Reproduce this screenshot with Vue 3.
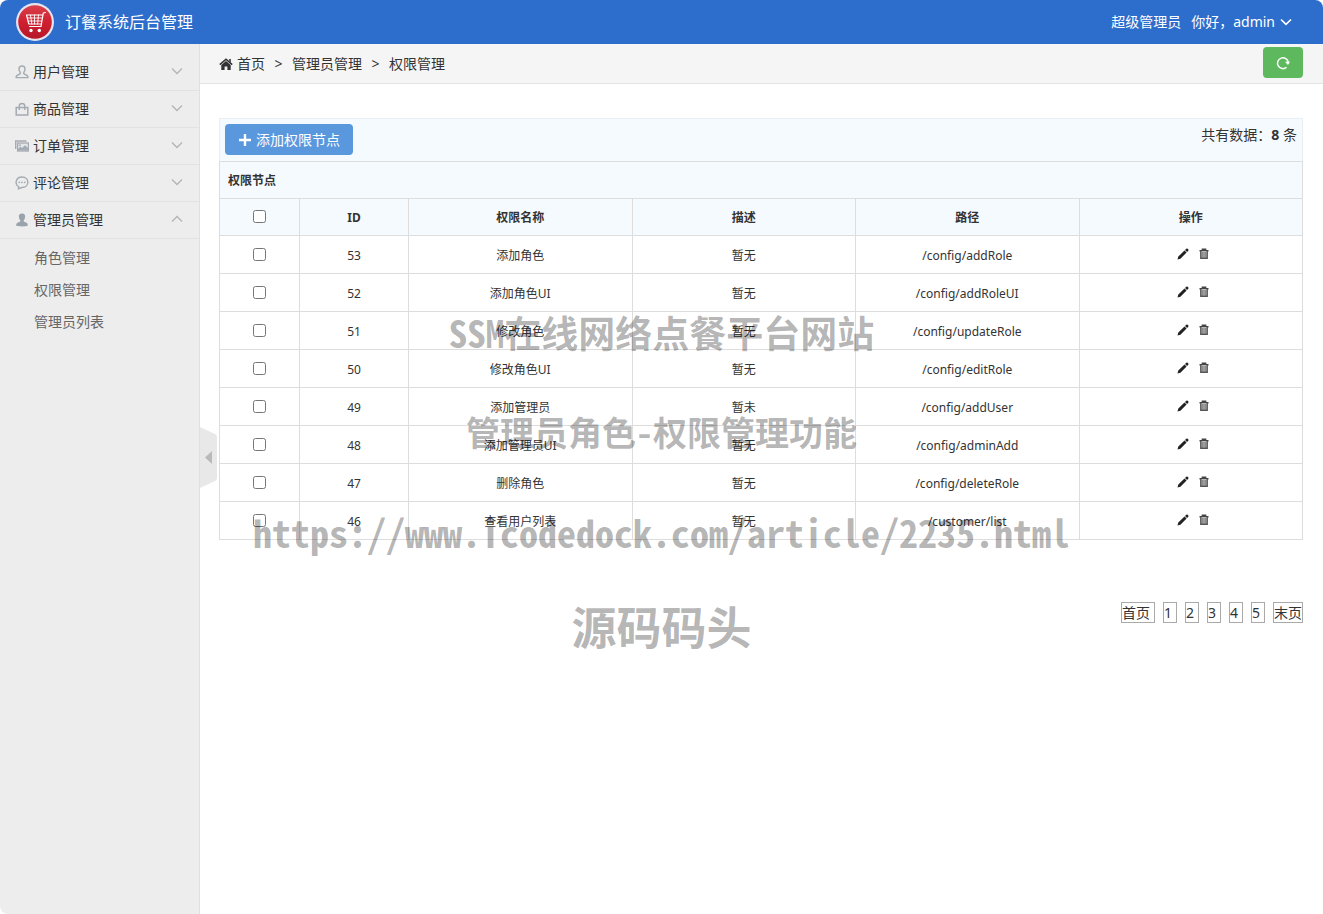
<script setup>
import { ref } from 'vue'

const menus = ref([
  { name: '用户管理', icon: 'user', open: false, items: [] },
  { name: '商品管理', icon: 'bag', open: false, items: [] },
  { name: '订单管理', icon: 'images', open: false, items: [] },
  { name: '评论管理', icon: 'comment', open: false, items: [] },
  { name: '管理员管理', icon: 'admin', open: true, items: ['角色管理', '权限管理', '管理员列表'] },
])

const rows = [
  { id: 53, name: '添加角色', desc: '暂无', path: '/config/addRole' },
  { id: 52, name: '添加角色UI', desc: '暂无', path: '/config/addRoleUI' },
  { id: 51, name: '修改角色', desc: '暂无', path: '/config/updateRole' },
  { id: 50, name: '修改角色UI', desc: '暂无', path: '/config/editRole' },
  { id: 49, name: '添加管理员', desc: '暂未', path: '/config/addUser' },
  { id: 48, name: '添加管理员UI', desc: '暂无', path: '/config/adminAdd' },
  { id: 47, name: '删除角色', desc: '暂无', path: '/config/deleteRole' },
  { id: 46, name: '查看用户列表', desc: '暂无', path: '/customer/list' },
]

const pages = ['首页', '1', '2', '3', '4', '5', '末页']
</script>

<template>
  <div class="app">
    <header class="topbar">
      <svg class="logo" viewBox="0 0 38 38" aria-hidden="true">
        <defs>
          <linearGradient id="red" x1="0" y1="0" x2="0" y2="1">
            <stop offset="0" stop-color="#d9404c" />
            <stop offset="0.5" stop-color="#cf1f30" />
            <stop offset="1" stop-color="#b5182a" />
          </linearGradient>
        </defs>
        <circle cx="19" cy="19" r="19" fill="#e6e4ee" />
        <circle cx="19" cy="19" r="16.8" fill="url(#red)" />
        <g fill="none" stroke="#fff" stroke-width="1.2" stroke-linecap="round" stroke-linejoin="round">
          <path d="M29.300 9.500 L27.300 10 L25 23.500 H13.500" />
          <path d="M10.500 12 H26.500 M10.500 12 L12.800 21 H25" />
          <path d="M11.500 15 H26 M12.200 18 H25.500 M14.500 12 L15.800 21 M18.500 12 V21 M22.500 12 L21.600 21" stroke-width="0.9" />
        </g>
        <circle cx="15" cy="27.500" r="1.700" fill="#fff" />
        <circle cx="23.300" cy="27.500" r="1.700" fill="#fff" />
      </svg>
      <h1 class="title">订餐系统后台管理</h1>
      <span class="role">超级管理员</span>
      <button class="account" type="button">
        你好，admin
        <svg viewBox="0 0 12 8" width="12" height="8" aria-hidden="true">
          <path d="M1 1.500 L6 6.300 L11 1.500" fill="none" stroke="#fff" stroke-width="1.700" />
        </svg>
      </button>
    </header>

    <div class="body">
      <aside class="sidebar">
        <nav>
          <section v-for="m in menus" :key="m.name">
            <button class="menu" type="button" :aria-expanded="m.open" @click="m.open = !m.open">
              <svg class="menu-icon" viewBox="0 0 14 14" aria-hidden="true">
                <g v-if="m.icon === 'user'" fill="none" stroke="#a5abb2" stroke-width="1.400" stroke-linejoin="round">
                  <path d="M7 1 C4.800 1 4 2.400 4 4 C4 5.800 4.800 6.800 5.300 7.600 C5.600 9 4.600 9.300 2.800 10 C1.300 10.600 1 11.200 1 12.600 H13 C13 11.200 12.700 10.600 11.200 10 C9.400 9.300 8.400 9 8.700 7.600 C9.200 6.800 10 5.800 10 4 C10 2.400 9.200 1 7 1 Z" />
                </g>
                <g v-else-if="m.icon === 'bag'" fill="none" stroke="#a5abb2" stroke-width="1.500">
                  <path d="M1.200 5.500 H12.800 V13 H1.200 Z M4.300 8 V4 C4.300 0.600 9.700 0.600 9.700 4 V8" />
                </g>
                <g v-else-if="m.icon === 'images'">
                  <path d="M0.700 10 V2 H11.500" fill="none" stroke="#a5abb2" stroke-width="1.400" />
                  <rect x="2.600" y="4" width="10.800" height="8" fill="#e4e6e8" stroke="#a5abb2" stroke-width="1.300" />
                  <path d="M3 11.500 V10 L5.500 7.500 L7 9 L10 6.300 L13 9 V11.500 Z" fill="#a5abb2" />
                  <circle cx="5" cy="6.200" r="0.900" fill="#a5abb2" />
                </g>
                <g v-else-if="m.icon === 'comment'">
                  <path d="M3.400 12.800 L3.700 10.900 C-0.800 8 0.800 1 7 1 C14.800 1 14.800 11.500 7 11.500 C5.800 11.500 5 12.300 3.400 12.800 Z" fill="none" stroke="#a5abb2" stroke-width="1.400" />
                  <g fill="#a5abb2">
                    <circle cx="4.200" cy="6.300" r="0.900" />
                    <circle cx="7" cy="6.300" r="0.900" />
                    <circle cx="9.800" cy="6.300" r="0.900" />
                  </g>
                </g>
                <path v-else fill="#9aa3ac" d="M7 0.500 C4.500 0.500 3.700 2 3.900 4 C4.100 5.800 4.800 6.800 5.400 7.600 C5.500 8.800 4.600 9 3 9.500 C1.400 10 1.200 11 1.200 12.600 C3 13.800 11 13.800 12.800 12.600 C12.800 11 12.600 10 11 9.500 C9.400 9 8.500 8.800 8.600 7.600 C9.200 6.800 9.900 5.800 10.100 4 C10.300 2 9.500 0.500 7 0.500 Z" />
              </svg>
              <span>{{ m.name }}</span>
              <svg class="arrow" viewBox="0 0 12 8" aria-hidden="true">
                <path :d="m.open ? 'M1 6.500 L6 1.500 L11 6.500' : 'M1 1.500 L6 6.500 L11 1.500'" fill="none" stroke="#b5b5b5" stroke-width="1.400" />
              </svg>
            </button>
            <ul v-if="m.open && m.items.length" class="submenu">
              <li v-for="s in m.items" :key="s"><a href="#">{{ s }}</a></li>
            </ul>
          </section>
        </nav>
      </aside>

      <main class="main">
        <button class="collapse" type="button" aria-label="收起菜单">
          <svg viewBox="0 0 17 61" aria-hidden="true">
            <path d="M0 0 L15 7 Q17 8 17 10 V51 Q17 53 15 54 L0 61 Z" fill="#e8e8e8" />
            <path d="M12 24 V37 L5 30.500 Z" fill="#b9b9b9" />
          </svg>
        </button>

        <div class="crumbbar">
          <nav class="crumbs">
            <svg viewBox="0 0 14 12" width="14" height="12" aria-hidden="true">
              <path d="M0.800 6.600 L7 1.200 L13.200 6.600" fill="none" stroke="#333" stroke-width="1.600" />
              <path d="M2.300 7 L7 3 L11.700 7 V12 H8.400 V8.500 H5.600 V12 H2.300 Z" fill="#333" />
              <path d="M10.200 1 H11.800 V4.500 L10.200 3 Z" fill="#333" />
            </svg>
            <a href="#">首页</a>
            <span class="sep">&gt;</span>
            <span>管理员管理</span>
            <span class="sep">&gt;</span>
            <span>权限管理</span>
          </nav>
          <button class="refresh" type="button" aria-label="刷新">
            <svg viewBox="0 0 14 14" width="14" height="14" aria-hidden="true">
              <path d="M10.500 11.300 A5.400 5.400 0 1 1 12.300 6.500" fill="none" stroke="#fff" stroke-width="1.500" />
              <path d="M9 5.800 H14 L12 9 Z" fill="#fff" />
            </svg>
          </button>
        </div>

        <div class="content">
          <div class="toolbar">
            <button class="add" type="button">
              <svg viewBox="0 0 12 12" width="12" height="12" aria-hidden="true">
                <path d="M6 0 V12 M0 6 H12" stroke="#fff" stroke-width="2.400" />
              </svg>
              添加权限节点
            </button>
            <span class="total">共有数据：<strong>8</strong> 条</span>
          </div>

          <table class="grid">
            <colgroup>
              <col class="c-check" />
              <col class="c-id" />
              <col span="4" />
            </colgroup>
            <thead>
              <tr><th class="caption" colspan="6" scope="colgroup">权限节点</th></tr>
              <tr>
                <th><input type="checkbox" aria-label="全选" /></th>
                <th scope="col">ID</th>
                <th scope="col">权限名称</th>
                <th scope="col">描述</th>
                <th scope="col">路径</th>
                <th scope="col">操作</th>
              </tr>
            </thead>
            <tbody>
              <tr v-for="r in rows" :key="r.id">
                <td><input type="checkbox" :aria-label="r.name" /></td>
                <td>{{ r.id }}</td>
                <td>{{ r.name }}</td>
                <td>{{ r.desc }}</td>
                <td>{{ r.path }}</td>
                <td>
                  <div class="actions">
                    <button type="button" aria-label="编辑">
                      <svg viewBox="0 0 12 12" width="12" height="12" aria-hidden="true">
                        <path d="M0.500 11.500 L1.300 8.600 L7.500 2.400 L9.600 4.500 L3.400 10.700 Z M8 1.900 L9.300 0.700 Q10 0.200 10.700 0.800 L11.200 1.300 Q11.800 2 11.300 2.700 L10.100 4 Z" fill="#222" />
                      </svg>
                    </button>
                    <button type="button" aria-label="删除">
                      <svg viewBox="0 0 12 12" width="12" height="12" aria-hidden="true">
                        <path d="M1.500 2.700 H10.500 M4.400 2.500 V1.300 H7.600 V2.500" fill="none" stroke="#444" stroke-width="1.500" />
                        <path d="M2.800 3 V10.300 H9.200 V3" fill="#bbb" stroke="#555" stroke-width="1.400" />
                        <path d="M4.900 4 V9.500 M7.100 4 V9.500" stroke="#666" stroke-width="0.900" />
                      </svg>
                    </button>
                  </div>
                </td>
              </tr>
            </tbody>
          </table>

          <nav class="pager" aria-label="分页">
            <a v-for="p in pages" :key="p" href="#" :class="{ first: p === '首页', num: p.length === 1 }">{{ p }}</a>
          </nav>
        </div>
      </main>
    </div>

    <div class="watermark">
      <p class="wm-a">SSM在线网络点餐平台网站</p>
      <p class="wm-b">管理员角色-权限管理功能</p>
      <p class="wm-c">https://www.icodedock.com/article/2235.html</p>
      <p class="wm-d">源码码头</p>
    </div>
  </div>
</template>

<style>
body {
  margin: 0;
  background: #fff;
}
</style>

<style scoped>
.app {
  position: relative;
  display: flex;
  flex-direction: column;
  min-height: 100vh;
  overflow: hidden;
  border-radius: 8px;
  background: #fff;
  color: #333;
  font: 14px/20px "Noto Sans", "Noto Sans CJK SC", sans-serif;
}
button {
  padding: 0;
  border: 0;
  background: none;
  color: inherit;
  font: inherit;
  cursor: pointer;
}
svg {
  display: block;
  flex: none;
}
a {
  color: inherit;
  text-decoration: none;
}

.topbar {
  display: flex;
  align-items: center;
  height: 44px;
  padding: 0 31px 0 16px;
  background: #2d6dcc;
  color: #fff;
}
.logo {
  width: 38px;
  height: 38px;
}
.title {
  flex: 1;
  margin: 0 0 0 11px;
  font-size: 16px;
  font-weight: 400;
}
.role {
  margin-right: 10px;
}
.account {
  display: flex;
  align-items: center;
  gap: 5px;
}

.body {
  display: flex;
  flex: 1;
}
.sidebar {
  box-sizing: border-box;
  flex: none;
  width: 200px;
  padding-top: 10px;
  border-right: 1px solid #e0e0e0;
  background: #ededed;
}
.menu {
  display: flex;
  align-items: center;
  width: 100%;
  height: 37px;
  padding: 0 16px 0 15px;
  border-bottom: 1px solid #e2e2e2;
  text-align: left;
}
.menu-icon {
  width: 14px;
  height: 14px;
  margin-right: 4px;
}
.arrow {
  width: 12px;
  height: 8px;
  margin-bottom: 2px;
  margin-left: auto;
}
.submenu {
  margin: 0;
  padding: 3px 0 0 34px;
  list-style: none;
  color: #666;
  line-height: 32px;
}

.main {
  position: relative;
  flex: 1;
  min-width: 0;
}
.collapse {
  position: absolute;
  top: calc(50% - 52px);
  left: 0;
  width: 17px;
  height: 61px;
}
.crumbbar {
  display: flex;
  align-items: center;
  justify-content: space-between;
  box-sizing: border-box;
  height: 40px;
  padding: 0 20px 2px 19px;
  border-bottom: 1px solid #e3e3e3;
  background: #f5f5f5;
}
.crumbs {
  display: flex;
  align-items: center;
  padding-top: 2px;
}
.crumbs a {
  margin-left: 4px;
}
.sep {
  width: 27px;
  text-align: center;
}
.refresh {
  display: grid;
  place-items: center;
  width: 40px;
  height: 31px;
  border-radius: 4px;
  background: #5eb95e;
}

.content {
  padding: 34px 20px 0 19px;
}
.toolbar {
  display: flex;
  align-items: flex-start;
  justify-content: space-between;
  padding: 5px;
  border: 1px solid #e8eef2;
  border-bottom: 0;
  background: #f5fafe;
}
.add {
  display: flex;
  align-items: center;
  gap: 5px;
  height: 31px;
  margin-bottom: 1px;
  padding: 0 13px 0 14px;
  border-radius: 4px;
  background: #5a98de;
  color: #fff;
}
.total {
  line-height: 22px;
}

.grid {
  width: 100%;
  border-collapse: collapse;
  table-layout: fixed;
  font-size: 12px;
  text-align: center;
}
.c-check {
  width: 80px;
}
.c-id {
  width: 109px;
}
.grid th,
.grid td {
  box-sizing: border-box;
  height: 38px;
  padding: 2px 8px 0;
  border: 1px solid #ddd;
}
.grid th {
  height: 37px;
  background: #f5fafe;
}
.grid .caption {
  text-align: left;
}
.grid input {
  display: block;
  width: 13px;
  height: 13px;
  margin: 0 auto 2px;
}
.grid th input {
  margin-bottom: 4px;
}
.actions {
  display: flex;
  justify-content: center;
  gap: 9px;
  padding: 0 0 3px 6px;
}

.pager {
  display: flex;
  justify-content: flex-end;
  gap: 8px;
  margin-top: 62px;
}
.pager a {
  border: 1px solid #aaa;
  line-height: 19px;
}
.pager .first {
  padding-right: 4px;
}
.pager .num {
  width: 12px;
}

.watermark {
  position: absolute;
  inset: 0;
  padding-top: 282px;
  color: rgba(0, 0, 0, 0.3);
  font-family: "Noto Sans Mono CJK SC", "Noto Sans CJK SC", monospace;
  font-weight: 700;
  line-height: 100px;
  text-align: center;
  white-space: nowrap;
  pointer-events: none;
}
.watermark p {
  height: 100px;
  margin: 0;
}
.wm-a {
  font-size: 37px;
}
.wm-b {
  font-size: 34px;
}
.wm-c {
  font-size: 38px;
}
.wm-d {
  font-size: 45px;
  line-height: 88px;
}
</style>
